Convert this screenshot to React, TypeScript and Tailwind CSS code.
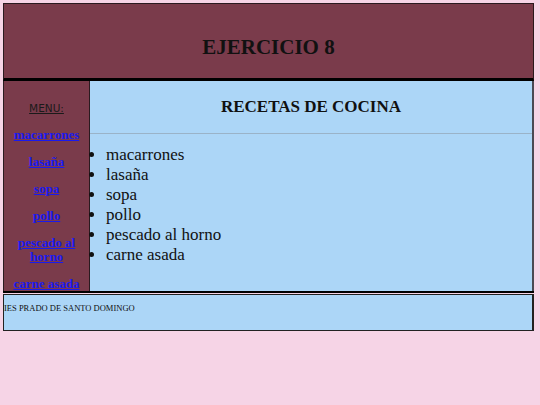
const recetas = ['macarrones', 'lasaña', 'sopa', 'pollo', 'pescado al horno', 'carne asada'];

export default function App() {
  return (
    <div className="min-h-[405px] w-[540px] bg-[#f6d4e6] pl-[3px] pt-[3px] font-['Liberation_Serif',serif]">
      <div className="w-[531px]">
        <header className="flex h-[78px] items-center justify-center border border-b-[3px] border-[#2a1a1f] border-b-black bg-[#7a3b4b] pt-[14px]">
          <h1 className="text-[21px] font-bold text-[#111]">EJERCICIO 8</h1>
        </header>

        <div className="flex h-[212px] border-b-[2px] border-black">
          <nav className="flex w-[87px] flex-col items-center gap-[13px] border-x border-[#2a1a1f] bg-[#7a3b4b] pt-[21px] text-center">
            <span className="font-['DejaVu_Sans',sans-serif] text-[10.5px] leading-[13px] text-[#1a1a1a] underline">
              MENU:
            </span>
            {recetas.map((r) => (
              <a
                key={r}
                href="#"
                className="px-1 text-[13px] font-bold leading-[14px] text-[#1a1aee] underline"
              >
                {r}
              </a>
            ))}
          </nav>

          <main className="flex flex-1 flex-col border-r-2 border-[#4a4a55] bg-[#acd6f7]">
            <div className="flex h-[53px] items-center justify-center border-b border-[#9ab3c8]">
              <h2 className="text-[17px] font-bold text-[#111]">RECETAS DE COCINA</h2>
            </div>
            <ul className="list-disc pl-[16px] pt-[11px] text-[17px] leading-[20px] text-[#111]">
              {recetas.map((r) => (
                <li key={r}>{r}</li>
              ))}
            </ul>
          </main>
        </div>

        <footer className="mt-px h-[37px] border border-r-2 border-[#222] bg-[#acd6f7] pt-[8px]">
          <p className="text-[8.5px] leading-[11px] text-[#111]">IES PRADO DE SANTO DOMINGO</p>
        </footer>
      </div>
    </div>
  );
}
